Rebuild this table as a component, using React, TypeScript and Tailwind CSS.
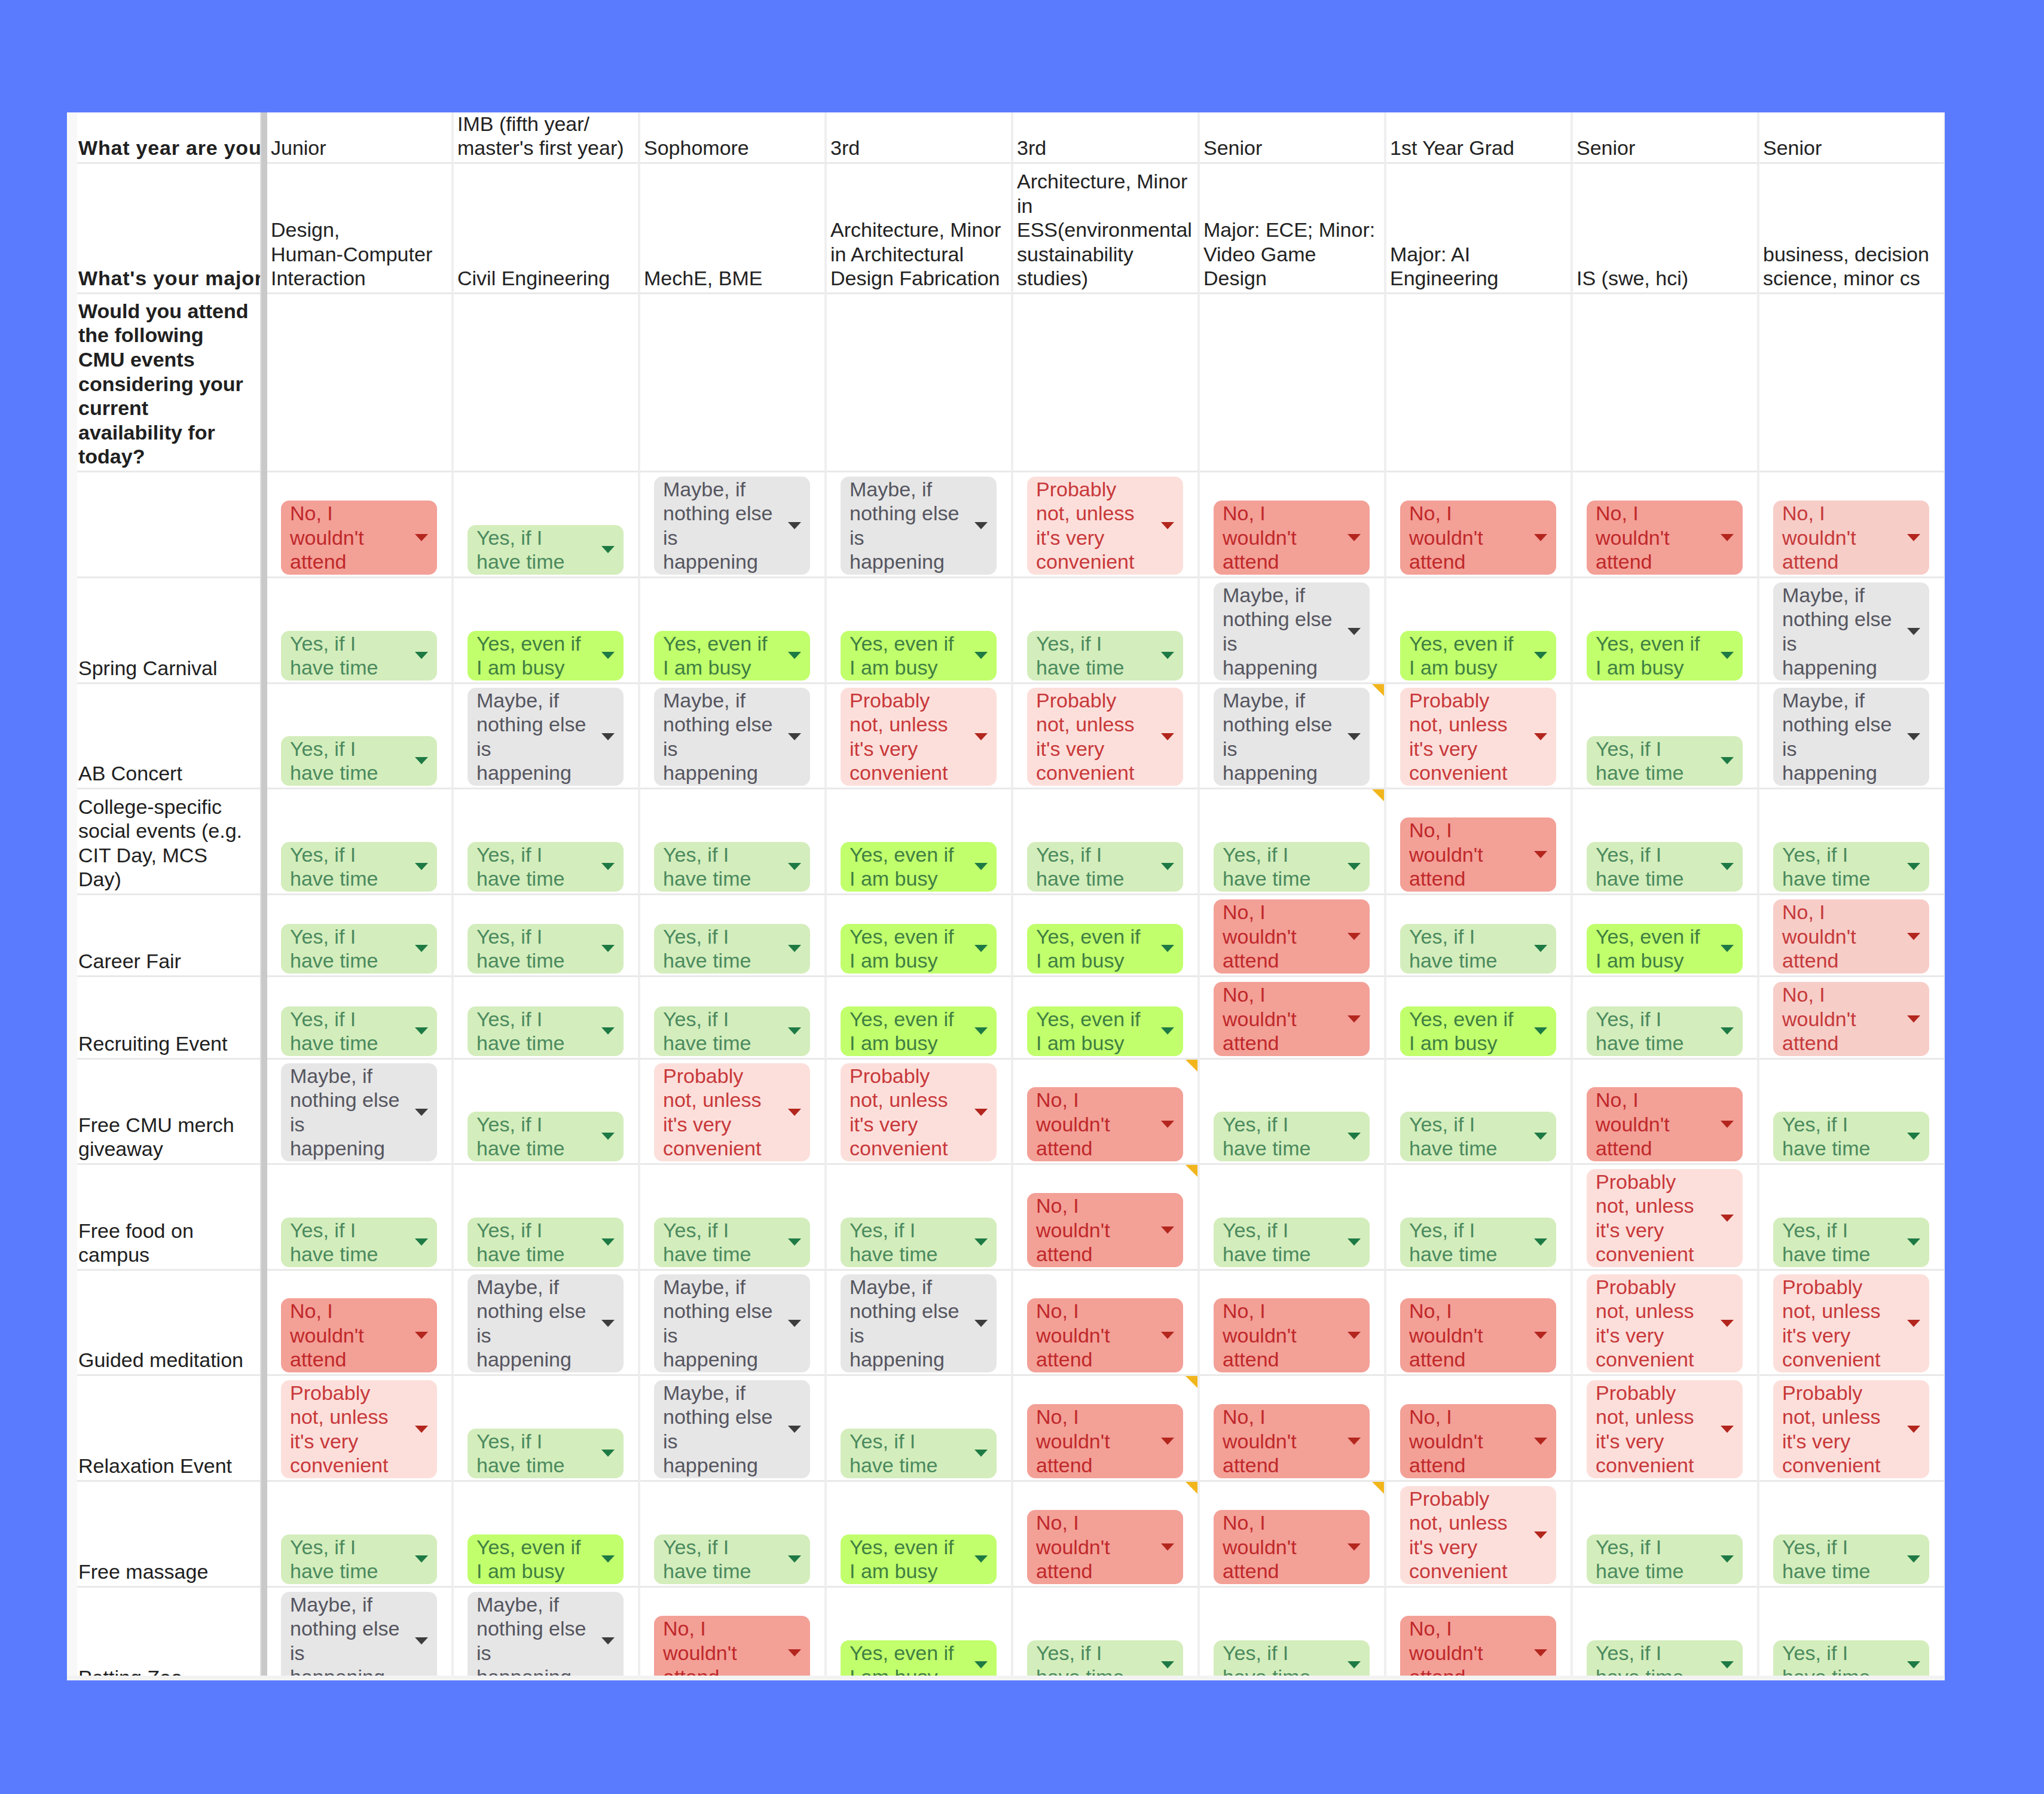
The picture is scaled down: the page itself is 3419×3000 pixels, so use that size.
import React from 'react';

type Code = 'N' | 'n' | 'P' | 'M' | 'Y' | 'E';

// dropdown chip presets, as the sheet's data validation colours them
const CHIPS: Record<Code, { lines: string[]; box: string; arrow: string }> = {
  N: { lines: ['No, I', "wouldn't", 'attend'], box: 'bg-[#f3a097] text-[#c0282a]', arrow: '#b3261e' },
  n: { lines: ['No, I', "wouldn't", 'attend'], box: 'bg-[#f7cdc8] text-[#c6393a]', arrow: '#b3261e' },
  P: { lines: ['Probably', 'not, unless', "it's very", 'convenient'], box: 'bg-[#fcdfdb] text-[#c8383a]', arrow: '#b3261e' },
  M: { lines: ['Maybe, if', 'nothing else', 'is', 'happening'], box: 'bg-[#e6e6e6] text-[#55555f]', arrow: '#3d3d3d' },
  Y: { lines: ['Yes, if I', 'have time'], box: 'bg-[#d4edbc] text-[#4a8a5e]', arrow: '#1e7a45' },
  E: { lines: ['Yes, even if', 'I am busy'], box: 'bg-[#c1ff6c] text-[#3f7f42]', arrow: '#1e7a45' },
};

const YEARS: string[][] = [
  ['Junior'],
  ['IMB (fifth year/', "master's first year)"],
  ['Sophomore'],
  ['3rd'],
  ['3rd'],
  ['Senior'],
  ['1st Year Grad'],
  ['Senior'],
  ['Senior'],
];

const MAJORS: string[][] = [
  ['Design,', 'Human-Computer', 'Interaction'],
  ['Civil Engineering'],
  ['MechE, BME'],
  ['Architecture, Minor', 'in Architectural', 'Design Fabrication'],
  ['Architecture, Minor', 'in', 'ESS(environmental', 'sustainability', 'studies)'],
  ['Major: ECE; Minor:', 'Video Game', 'Design'],
  ['Major: AI', 'Engineering'],
  ['IS (swe, hci)'],
  ['business, decision', 'science, minor cs'],
];

const EVENTS: { label: string[]; h: number; cells: string }[] = [
  { label: [], h: 177, cells: 'NYMMPNNNn' },
  { label: ['Spring Carnival'], h: 177, cells: 'YEEEYMEEM' },
  { label: ['AB Concert'], h: 176, cells: 'YMMPPMPYM' },
  { label: ['College-specific', 'social events (e.g.', 'CIT Day, MCS', 'Day)'], h: 177, cells: 'YYYEYYNYY' },
  { label: ['Career Fair'], h: 137, cells: 'YYYEENYEn' },
  { label: ['Recruiting Event'], h: 138, cells: 'YYYEENEYn' },
  { label: ['Free CMU merch', 'giveaway'], h: 176, cells: 'MYPPNYYNY' },
  { label: ['Free food on', 'campus'], h: 177, cells: 'YYYYNYYPY' },
  { label: ['Guided meditation'], h: 176, cells: 'NMMMNNNPP' },
  { label: ['Relaxation Event'], h: 177, cells: 'PYMYNNNPP' },
  { label: ['Free massage'], h: 177, cells: 'YEYENNPYY' },
  { label: ['Petting Zoo'], h: 177, cells: 'MMNEYYNYY' },
];

// cells carrying a note marker: "row-col"
const NOTES = new Set(['2-5', '3-5', '6-4', '7-4', '9-4', '10-4', '10-5']);

function Lines({ lines }: { lines: string[] }) {
  return (
    <div className="leading-[40.6px] whitespace-nowrap">
      {lines.map((l, i) => (
        <div key={i}>{l}</div>
      ))}
    </div>
  );
}

function Chip({ code }: { code: Code }) {
  const c = CHIPS[code];
  return (
    <div className={`ml-[23px] mb-[3px] w-[261px] rounded-[14px] pl-[15px] pr-[15px] py-[1px] flex items-center justify-between ${c.box}`}>
      <Lines lines={c.lines} />
      <svg width="22" height="12" viewBox="0 0 22 12" className="shrink-0">
        <path d="M0 0H22L11 12Z" fill={c.arrow} />
      </svg>
    </div>
  );
}

function NoteMark() {
  return (
    <svg width="20" height="20" viewBox="0 0 20 20" className="absolute top-0 right-0">
      <path d="M0 0H20V20Z" fill="#f2b61c" />
    </svg>
  );
}

function Row({ h, first, bold, children }: { h: number; first: React.ReactNode; bold?: boolean; children: React.ReactNode }) {
  return (
    <div className="flex shrink-0" style={{ height: h }}>
      <div className={`w-[306px] shrink-0 overflow-hidden flex items-end pl-[2px] pb-[3px] border-b-[3px] border-[#e9e9e9] text-[#202020] ${bold ? 'font-bold' : ''}`}>
        {first}
      </div>
      <div className="w-[12px] shrink-0 bg-[#c9c9c9] border-l-[2px] border-[#dedede]" />
      {children}
    </div>
  );
}

function Cell({ children, note }: { children?: React.ReactNode; note?: boolean }) {
  return (
    <div className="relative w-[312px] shrink-0 flex items-end border-b-[3px] border-r-[4px] border-b-[#e9e9e9] border-r-[#efefef]">
      {children}
      {note && <NoteMark />}
    </div>
  );
}

export default function App() {
  return (
    <div className="w-[3419px] h-[3000px] bg-[#5b7bff] pt-[188px] pl-[112px] text-[34px] font-['Liberation_Sans',Arial,sans-serif]">
      <div className="w-[3141px] h-[2622px] bg-white flex flex-col overflow-hidden">
        <div className="flex flex-1 overflow-hidden">
          <div className="w-[17px] shrink-0 bg-[#f8f8f8]" />
          <div className="flex flex-col">
            <Row h={86} bold first={<span className="whitespace-nowrap leading-[40.6px] tracking-[0.8px]">What year are you?</span>}>
              {YEARS.map((y, i) => (
                <Cell key={i}>
                  <div className="pl-[6px] pb-[3px] text-[#222]">
                    <Lines lines={y} />
                  </div>
                </Cell>
              ))}
            </Row>
            <Row h={218} bold first={<span className="whitespace-nowrap leading-[40.6px] tracking-[0.8px]">What's your major?</span>}>
              {MAJORS.map((m, i) => (
                <Cell key={i}>
                  <div className="pl-[6px] pb-[3px] text-[#222]">
                    <Lines lines={m} />
                  </div>
                </Cell>
              ))}
            </Row>
            <Row
              h={298}
              bold
              first={
                <Lines
                  lines={['Would you attend', 'the following', 'CMU events', 'considering your', 'current', 'availability for', 'today?']}
                />
              }
            >
              {YEARS.map((_, i) => (
                <Cell key={i} />
              ))}
            </Row>
            {EVENTS.map((ev, r) => (
              <Row key={r} h={ev.h} first={<Lines lines={ev.label} />}>
                {ev.cells.split('').map((c, i) => (
                  <Cell key={i} note={NOTES.has(`${r}-${i}`)}>
                    <Chip code={c as Code} />
                  </Cell>
                ))}
              </Row>
            ))}
          </div>
        </div>
        <div className="h-[8px] shrink-0 bg-[#f3f3f3]" />
      </div>
    </div>
  );
}
